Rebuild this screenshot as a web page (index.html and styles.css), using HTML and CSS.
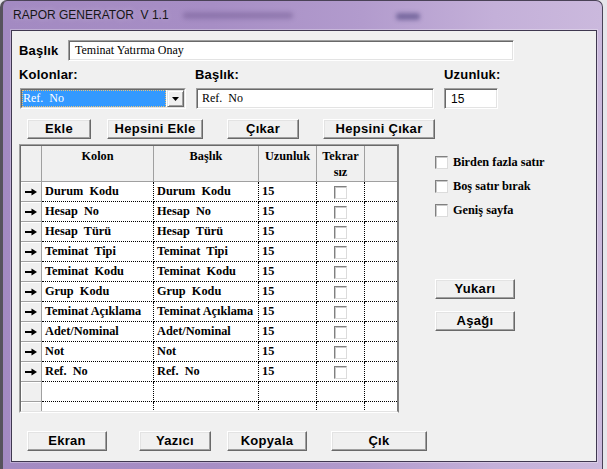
FILE: index.html
```html
<!DOCTYPE html>
<html lang="tr">
<head>
<meta charset="utf-8">
<title>RAPOR GENERATOR V 1.1</title>
<link rel="stylesheet" href="styles.css">
</head>
<body>
<div class="window">
  <div class="titlebar">
    <span class="title">RAPOR GENERATOR&nbsp; V 1.1</span>
    <div class="blur blur1"></div>
    <div class="blur blur2"></div>
  </div>
  <div class="client">
    <div class="row-title">
      <div class="lbl">Başlık</div>
      <div class="field f-title">Teminat Yatırma Onay</div>
    </div>

    <div class="fields">
      <div class="fg fg1">
        <div class="lbl">Kolonlar:</div>
        <div class="combo">
          <div class="combo-in">
            <div class="combo-sel">Ref.  No</div>
            <div class="combo-btn"><svg width="7" height="4" viewBox="0 0 7 4"><path d="M0 0H7L3.5 4Z" fill="#000"/></svg></div>
          </div>
        </div>
      </div>
      <div class="fg fg2">
        <div class="lbl">Başlık:</div>
        <div class="field f-baslik">Ref.  No</div>
      </div>
      <div class="fg fg3">
        <div class="lbl">Uzunluk:</div>
        <div class="field f-len">15</div>
      </div>
    </div>

    <div class="btnrow top">
      <div class="btn b-ekle">Ekle</div>
      <div class="btn b-hekle">Hepsini Ekle</div>
      <div class="btn b-cikar">Çıkar</div>
      <div class="btn b-hcikar">Hepsini Çıkar</div>
    </div>

    <div class="main">
      <div class="grid-outer">
        <div class="grid">
          <div class="hc"></div>
          <div class="hc">Kolon</div>
          <div class="hc">Başlık</div>
          <div class="hc">Uzunluk</div>
          <div class="hc">Tekrar<br>sız</div>
          <div class="hc last"></div>

          <div class="ic"><svg class="arr" width="12" height="8" viewBox="0 0 12 8"><rect x="0" y="3" width="8" height="2"/><path d="M6.5 0.5L12 4L6.5 7.5Z"/></svg></div>
          <div class="dc">Durum  Kodu</div><div class="dc">Durum  Kodu</div><div class="dc">15</div><div class="dc cc"><span class="cb"></span></div><div class="dc last"></div>

          <div class="ic"><svg class="arr" width="12" height="8" viewBox="0 0 12 8"><rect x="0" y="3" width="8" height="2"/><path d="M6.5 0.5L12 4L6.5 7.5Z"/></svg></div>
          <div class="dc">Hesap  No</div><div class="dc">Hesap  No</div><div class="dc">15</div><div class="dc cc"><span class="cb"></span></div><div class="dc last"></div>

          <div class="ic"><svg class="arr" width="12" height="8" viewBox="0 0 12 8"><rect x="0" y="3" width="8" height="2"/><path d="M6.5 0.5L12 4L6.5 7.5Z"/></svg></div>
          <div class="dc">Hesap  Türü</div><div class="dc">Hesap  Türü</div><div class="dc">15</div><div class="dc cc"><span class="cb"></span></div><div class="dc last"></div>

          <div class="ic"><svg class="arr" width="12" height="8" viewBox="0 0 12 8"><rect x="0" y="3" width="8" height="2"/><path d="M6.5 0.5L12 4L6.5 7.5Z"/></svg></div>
          <div class="dc">Teminat  Tipi</div><div class="dc">Teminat  Tipi</div><div class="dc">15</div><div class="dc cc"><span class="cb"></span></div><div class="dc last"></div>

          <div class="ic"><svg class="arr" width="12" height="8" viewBox="0 0 12 8"><rect x="0" y="3" width="8" height="2"/><path d="M6.5 0.5L12 4L6.5 7.5Z"/></svg></div>
          <div class="dc">Teminat  Kodu</div><div class="dc">Teminat  Kodu</div><div class="dc">15</div><div class="dc cc"><span class="cb"></span></div><div class="dc last"></div>

          <div class="ic"><svg class="arr" width="12" height="8" viewBox="0 0 12 8"><rect x="0" y="3" width="8" height="2"/><path d="M6.5 0.5L12 4L6.5 7.5Z"/></svg></div>
          <div class="dc">Grup  Kodu</div><div class="dc">Grup  Kodu</div><div class="dc">15</div><div class="dc cc"><span class="cb"></span></div><div class="dc last"></div>

          <div class="ic"><svg class="arr" width="12" height="8" viewBox="0 0 12 8"><rect x="0" y="3" width="8" height="2"/><path d="M6.5 0.5L12 4L6.5 7.5Z"/></svg></div>
          <div class="dc">Teminat Açıklama</div><div class="dc">Teminat Açıklama</div><div class="dc">15</div><div class="dc cc"><span class="cb"></span></div><div class="dc last"></div>

          <div class="ic"><svg class="arr" width="12" height="8" viewBox="0 0 12 8"><rect x="0" y="3" width="8" height="2"/><path d="M6.5 0.5L12 4L6.5 7.5Z"/></svg></div>
          <div class="dc">Adet/Nominal</div><div class="dc">Adet/Nominal</div><div class="dc">15</div><div class="dc cc"><span class="cb"></span></div><div class="dc last"></div>

          <div class="ic"><svg class="arr" width="12" height="8" viewBox="0 0 12 8"><rect x="0" y="3" width="8" height="2"/><path d="M6.5 0.5L12 4L6.5 7.5Z"/></svg></div>
          <div class="dc">Not</div><div class="dc">Not</div><div class="dc">15</div><div class="dc cc"><span class="cb"></span></div><div class="dc last"></div>

          <div class="ic"><svg class="arr" width="12" height="8" viewBox="0 0 12 8"><rect x="0" y="3" width="8" height="2"/><path d="M6.5 0.5L12 4L6.5 7.5Z"/></svg></div>
          <div class="dc">Ref.  No</div><div class="dc">Ref.  No</div><div class="dc">15</div><div class="dc cc"><span class="cb"></span></div><div class="dc last"></div>

          <div class="ic"></div>
          <div class="dc"></div><div class="dc"></div><div class="dc"></div><div class="dc"></div><div class="dc last"></div>

          <div class="ic"></div>
          <div class="dc"></div><div class="dc"></div><div class="dc"></div><div class="dc"></div><div class="dc last"></div>
        </div>
      </div>

      <div class="side">
        <div class="opt"><span class="cb"></span><span class="opt-l">Birden fazla satır</span></div>
        <div class="opt"><span class="cb"></span><span class="opt-l">Boş satır bırak</span></div>
        <div class="opt"><span class="cb"></span><span class="opt-l">Geniş sayfa</span></div>
        <div class="btn b-side b-yukari">Yukarı</div>
        <div class="btn b-side b-asagi">Aşağı</div>
      </div>
    </div>

    <div class="btnrow bottom">
      <div class="btn b-ekran">Ekran</div>
      <div class="btn b-yazici">Yazıcı</div>
      <div class="btn b-kopyala">Kopyala</div>
      <div class="btn b-cik">Çık</div>
    </div>
  </div>
</div>
</body>
</html>
```
FILE: styles.css
```css
* { box-sizing: border-box; }
html, body { margin: 0; padding: 0; }
body {
  width: 607px;
  height: 469px;
  overflow: hidden;
  background: #e6e6ea;
  font-family: "Liberation Sans", Arial, sans-serif;
  color: #000;
}

.window {
  width: 603px;
  height: 472px;
  border-left: 3px solid #56535c;
  border-top: 1px solid #4a4257;
  border-right: 1px solid #4a4257;
  border-radius: 7px 7px 0 0;
  background: linear-gradient(90deg, #a38ac2 0%, #a78ec5 35%, #b29bcd 60%, #c4b0d9 82%, #cbb9dd 100%);
  padding: 0 5px 0 8px;
  overflow: hidden;
}

.titlebar {
  height: 29px;
  display: flex;
  align-items: center;
  padding: 0 0 1px 2px;
  position: relative;
}
.title {
  font-size: 12px;
  color: #161616;
  white-space: pre;
  text-shadow: 0 0 6px rgba(255,255,255,0.35);
}
.blur {
  position: absolute;
  filter: blur(2px);
}
.blur1 {
  left: 172px;
  top: 11px;
  width: 110px;
  height: 7px;
  background: rgba(85, 62, 120, 0.3);
  border-radius: 3px;
}
.blur2 {
  left: 385px;
  top: 12px;
  width: 24px;
  height: 7px;
  background: rgba(70, 60, 120, 0.55);
  border-radius: 3px;
}

.client {
  height: 432px;
  background: #f0f0f0;
  border: 1px solid #3f3850;
  box-shadow: 0 0 0 1px rgba(255,255,255,0.3);
  padding: 0 0 0 7px;
}

.lbl {
  font-weight: bold;
  font-size: 13px;
  line-height: 15px;
  letter-spacing: 0.2px;
}

.field {
  background: #fff;
  height: 21px;
  border: 1px solid;
  border-color: #a0a0a0 #ffffff #ffffff #a0a0a0;
  box-shadow: inset 1px 1px 0 #696969, inset -1px -1px 0 #e3e3e3;
  display: flex;
  align-items: center;
  font-family: "Liberation Serif", "Times New Roman", serif;
  font-size: 12px;
  white-space: pre;
}

.row-title {
  display: flex;
  align-items: center;
  margin-top: 9px;
  height: 21px;
}
.row-title .lbl { width: 49px; }
.f-title { width: 446px; padding-left: 6px; }

.fields { display: flex; margin-top: 6px; }
.fg { display: flex; flex-direction: column; }
.fg .lbl { height: 15px; margin-bottom: 6px; }
.fg1 { width: 176px; }
.fg2 { width: 249px; }
.f-baslik { margin-left: 1px; width: 238px; padding-left: 5px; }
.f-len {
  width: 54px;
  padding-left: 6px;
  font-family: "Liberation Sans", Arial, sans-serif;
  font-size: 12px;
  color: #000;
}

.combo {
  margin-left: 1px;
  width: 166px;
  height: 21px;
  border: 1px solid;
  border-color: #a0a0a0 #ffffff #ffffff #a0a0a0;
  background: #fff;
}
.combo-in {
  height: 100%;
  display: flex;
  border: 1px solid;
  border-color: #696969 #e3e3e3 #e3e3e3 #696969;
  background: #fff;
}
.combo-sel {
  flex: 1;
  margin-right: 1px;
  background: #3399ff;
  color: #fff;
  outline: 1px dotted #e8c27a;
  outline-offset: -1px;
  padding-left: 1px;
  display: flex;
  align-items: center;
  font-family: "Liberation Serif", "Times New Roman", serif;
  font-size: 12px;
  white-space: pre;
}
.combo-btn {
  width: 17px;
  background: #f0f0f0;
  border: 1px solid;
  border-color: #e3e3e3 #696969 #696969 #e3e3e3;
  box-shadow: inset 1px 1px 0 #fff, inset -1px -1px 0 #a0a0a0;
  display: flex;
  align-items: center;
  justify-content: center;
  padding-top: 1px;
}

.btnrow { display: flex; }
.btnrow.top { margin-top: 10px; }
.btnrow.bottom { margin-top: 18px; }

.btn {
  height: 20px;
  background: #f0f0f0;
  border: 1px solid;
  border-color: #ffffff #696969 #696969 #ffffff;
  box-shadow: inset -1px -1px 0 #a0a0a0, inset 1px 1px 0 #e3e3e3;
  display: flex;
  align-items: center;
  justify-content: center;
  font-weight: bold;
  font-size: 13px;
  letter-spacing: 0.3px;
  white-space: pre;
  padding-bottom: 1px;
}
.b-ekle { margin-left: 8px; width: 64px; }
.b-hekle { margin-left: 16px; width: 96px; }
.b-cikar { margin-left: 24px; width: 72px; }
.b-hcikar { margin-left: 24px; width: 112px; }

.b-ekran { margin-left: 8px; width: 80px; }
.b-yazici { margin-left: 32px; width: 72px; }
.b-kopyala { margin-left: 16px; width: 80px; }
.b-cik { margin-left: 24px; width: 96px; }

.main { display: flex; margin-top: 5px; }

.grid-outer {
  width: 380px;
  height: 269px;
  border: 1px solid;
  border-color: #a0a0a0 #808080 #ffffff #a0a0a0;
}
.grid {
  height: 100%;
  border: 1px solid;
  border-color: #696969 #7a7a7a #e3e3e3 #696969;
  background: #fff;
  overflow: hidden;
  display: grid;
  grid-template-columns: 21px 112px 105px 58px 48px 32px;
  grid-template-rows: 36px;
  grid-auto-rows: 20px;
}

.hc {
  background: #f0f0f0;
  border-right: 1px solid #a0a0a0;
  border-bottom: 1px solid #a0a0a0;
  font-family: "Liberation Serif", "Times New Roman", serif;
  font-weight: bold;
  font-size: 12.3px;
  line-height: 16px;
  text-align: center;
  padding-top: 2px;
}
.hc.last { border-right: none; }

.ic {
  background: #f0f0f0;
  border-right: 1px solid #a0a0a0;
  border-bottom: 1px solid #a0a0a0;
  box-shadow: inset 1px 1px 0 #fff;
  display: flex;
  align-items: center;
  padding-left: 4px;
}
.arr { display: block; fill: #000; }

.dc {
  background: #fff;
  border-right: 1px dotted #000;
  border-bottom: 1px dotted #000;
  font-family: "Liberation Serif", "Times New Roman", serif;
  font-weight: bold;
  font-size: 12.3px;
  line-height: 19px;
  padding-left: 3px;
  white-space: pre;
  overflow: hidden;
}
.dc.last { border-right: none; }
.dc.cc {
  padding: 1px 0 0 0;
  display: flex;
  align-items: center;
  justify-content: center;
}

.cb {
  display: block;
  width: 13px;
  height: 13px;
  background: #fff;
  border: 1px solid;
  border-color: #808080 #dcdcdc #dcdcdc #808080;
  box-shadow: inset 1px 1px 0 #c8c8c8;
  flex: none;
}

.side {
  margin-left: 36px;
  margin-top: 6px;
  display: flex;
  flex-direction: column;
}
.opt { height: 24px; display: flex; align-items: center; }
.opt .cb { margin-right: 5px; }
.opt-l {
  font-family: "Liberation Serif", "Times New Roman", serif;
  font-weight: bold;
  font-size: 12.3px;
  white-space: pre;
}
.b-side { width: 80px; }
.b-yukari { margin-top: 57px; }
.b-asagi { margin-top: 12px; }
```
